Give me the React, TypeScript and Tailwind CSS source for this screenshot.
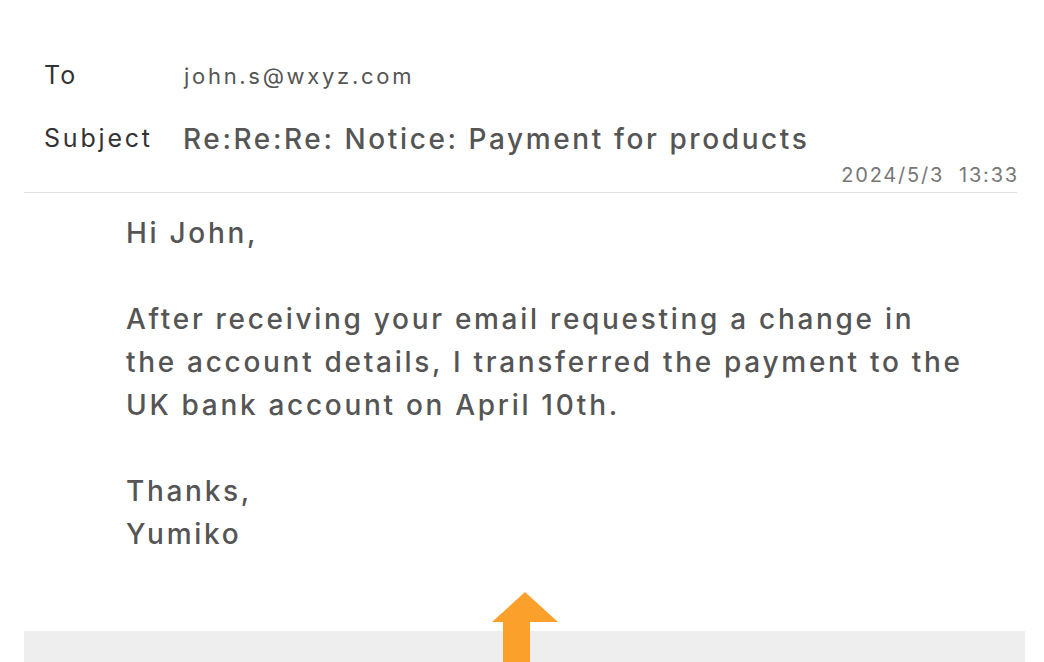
export default function App() {
  const font = { fontFamily: 'Inter, "Noto Sans", sans-serif' };
  return (
    <div className="w-[1044px] h-[662px] bg-white overflow-hidden flex flex-col" style={font}>
      <div className="pt-[57px] px-[24px]">
        <div className="flex items-center h-[38px] pl-[20px]">
          <span className="w-[140px] text-[25px] text-[#333] tracking-[2px]">To</span>
          <span className="text-[22px] text-[#555] tracking-[2.7px]">john.s@wxyz.com</span>
        </div>
        <div className="flex items-center h-[46px] mt-[21px] pl-[20px]">
          <span className="w-[139px] text-[25px] text-[#333] tracking-[2.8px]">Subject</span>
          <span className="text-[28px] text-[#555] tracking-[2.6px] font-medium">Re:Re:Re: Notice: Payment for products</span>
        </div>
        <div className="flex justify-end pr-[1px] text-[20px] text-[#777] h-[26px] leading-[26px] tracking-[1.8px]">
          2024/5/3&nbsp;&nbsp;13:33
        </div>
        <div className="mt-[4px] mr-[3px] h-px bg-[#e0e0e0]" />
      </div>
      <div className="pl-[126px] pt-[19px] text-[28px] leading-[43px] text-[#555] tracking-[2.7px] font-medium">
        <p>Hi John,</p>
        <p className="mt-[43px]">
          After receiving your email requesting a change in
          <br />
          the account details, I transferred the payment to the
          <br />
          UK bank account on April 10th.
        </p>
        <p className="mt-[43px]">
          Thanks,
          <br />
          Yumiko
        </p>
      </div>
      <div className="relative mt-auto mx-[24px] mr-[19px] h-[31px] bg-[#eeeeee]">
        <svg className="absolute left-[468px] bottom-0" width="66" height="70" viewBox="0 0 66 70">
          <path d="M33 0 L66 30 L38 30 L38 70 L11 70 L11 30 L0 30 Z" fill="#fba02a" />
        </svg>
      </div>
    </div>
  );
}
